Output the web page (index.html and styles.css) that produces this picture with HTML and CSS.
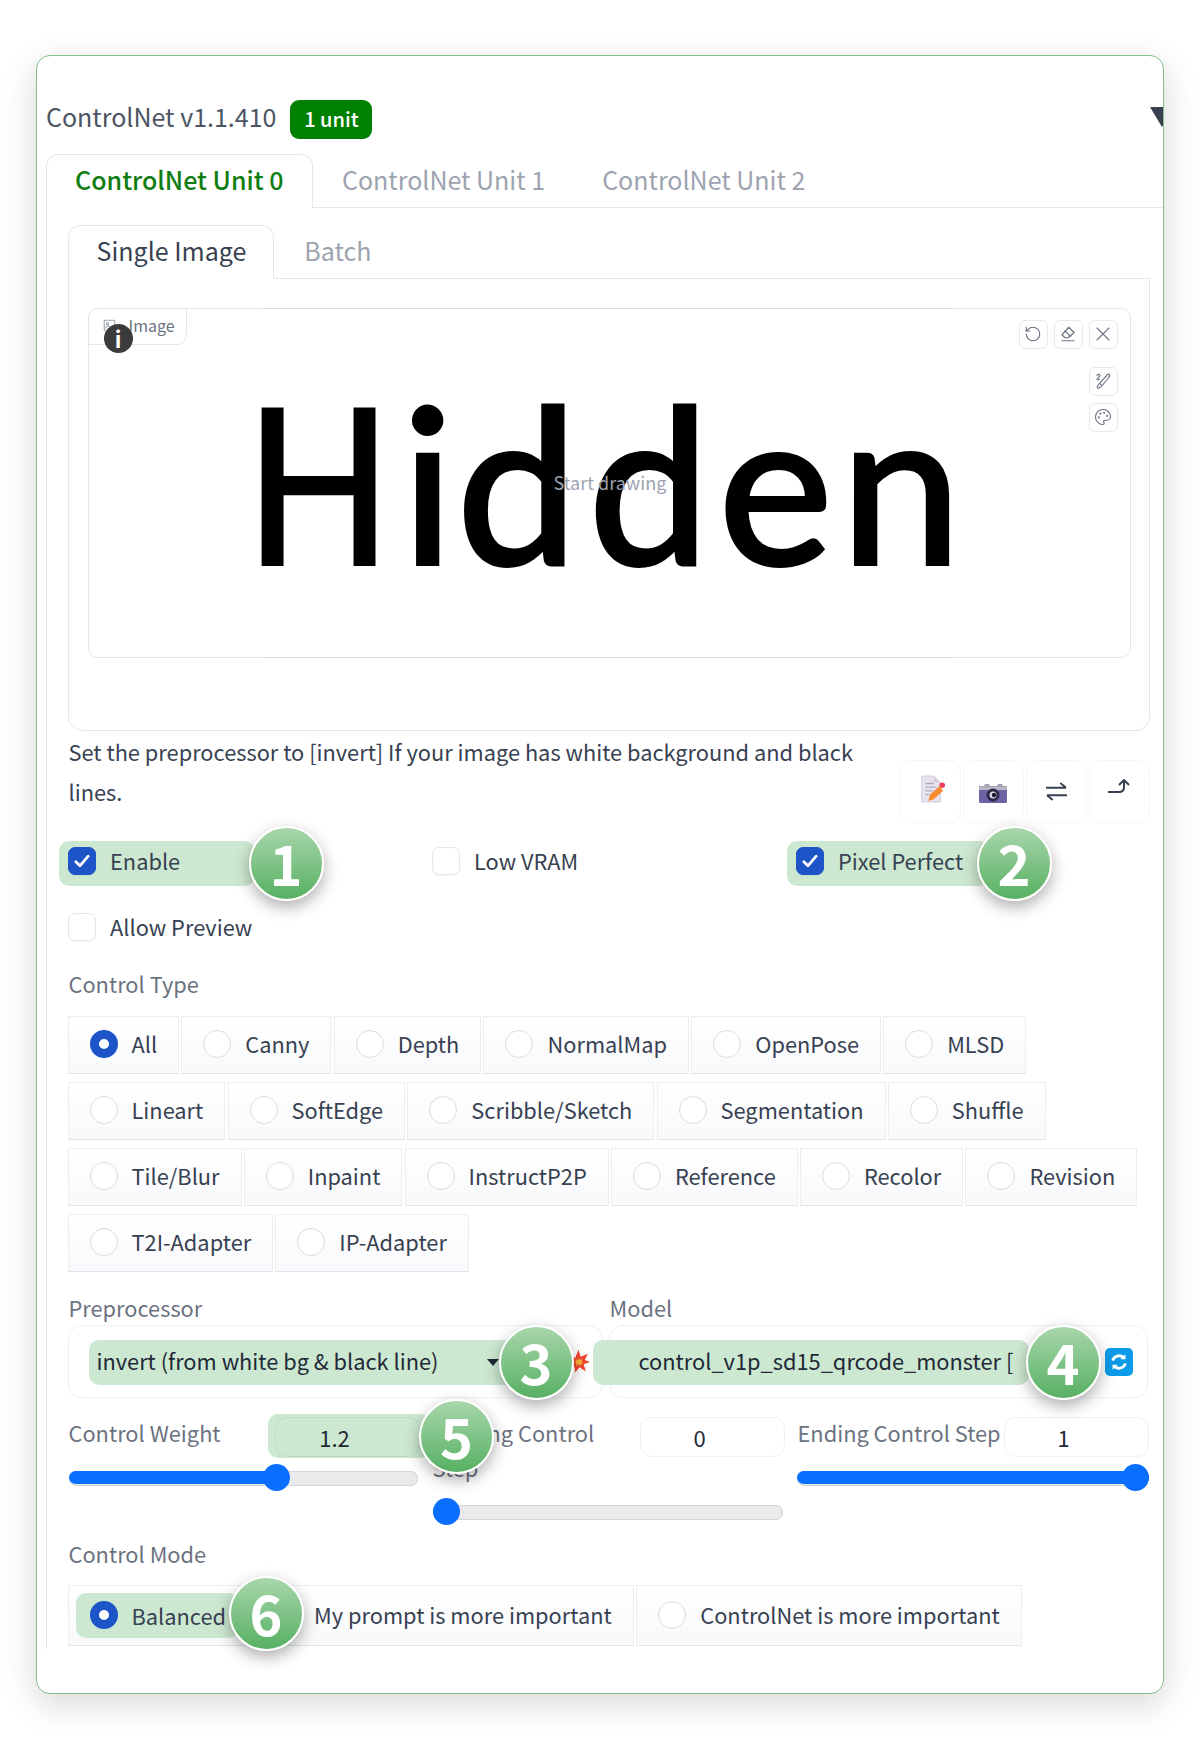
FILE: index.html
```html
<!DOCTYPE html>
<html lang="en">
<head>
<meta charset="utf-8">
<title>ControlNet</title>
<link rel="stylesheet" href="styles.css">
</head>
<body>
<main class="card">
  <header class="head">
    <span class="title">ControlNet v1.1.410</span>
    <span class="unit">1 unit</span>
    <span class="caret"></span>
  </header>
  <nav class="tabs">
    <span class="tab tab-on tab-green">ControlNet Unit 0</span>
    <span class="tab">ControlNet Unit 1</span>
    <span class="tab">ControlNet Unit 2</span>
  </nav>
  <section class="panel">
    <nav class="subtabs">
      <span class="tab tab-on tab-dark">Single Image</span>
      <span class="tab tab-batch">Batch</span>
    </nav>
    <div class="subpanel">
      <div class="imgblock">
        <div class="imglabel">
          <svg class="ico-pic" viewBox="0 0 16 16" fill="none" stroke="#9ca3af" stroke-width="1.3"><rect x="1.5" y="1.5" width="13" height="13" rx="1.5"/><circle cx="5.5" cy="5.5" r="1.3"/><path d="M2 12l4-4 3 3 2-2 3 3"/></svg>
          <span>Image</span>
        </div>
        <span class="info">i</span>
        <div class="canvas"><span class="hidden-word"><span class="hw hw-h">H</span><span class="hw hw-i">i</span><span class="hw hw-d1">d</span><span class="hw hw-d2">d</span><span class="hw hw-e">e</span><span class="hw hw-n">n</span></span></div>
        <span class="startdraw">Start drawing</span>
        <div class="tools">
          <div class="toolrow">
            <span class="tool"><svg viewBox="0 0 24 24"><path d="M3 12a9 9 0 1 0 9-9 9.75 9.75 0 0 0-6.74 2.74L3 8"/><path d="M3 3v5h5"/></svg></span>
            <span class="tool"><svg viewBox="0 0 24 24"><path d="M13 3l7 7-7.5 7H8l-4-4z"/><path d="M8 8l7.5 7"/><path d="M4 21h16"/></svg></span>
            <span class="tool"><svg viewBox="0 0 24 24"><path d="M4 4l16 16M20 4L4 20"/></svg></span>
          </div>
          <span class="tool tool-gap"><svg viewBox="0 0 24 24"><path d="M20 3c1.5 1 1.5 2.500 0 4L11 18c-1 1.200-3 3.500-5 3.500-1.500 0-2-1.500-1.500-2.500C6 16.500 16 6 17 4.500 18 3.200 19 2.500 20 3z"/><path d="M8 15.500l2 2"/><path d="M4 4.500c1-1.500 4-2 4 0s-4 3.500-4 5c0 1.200 2.500 1 3.500 0"/></svg></span>
          <span class="tool tool-gap2"><svg viewBox="0 0 24 24"><circle cx="13.500" cy="6.500" r=".6"/><circle cx="17.500" cy="10.500" r=".6"/><circle cx="8.500" cy="7.500" r=".6"/><circle cx="6.500" cy="12.500" r=".6"/><path d="M12 2C6.500 2 2 6.500 2 12s4.500 10 10 10c.926 0 1.648-.746 1.648-1.688 0-.437-.18-.835-.437-1.125-.29-.289-.438-.652-.438-1.125a1.640 1.640 0 0 1 1.668-1.668h1.996c3.051 0 5.555-2.503 5.555-5.554C21.965 6.012 17.461 2 12 2z"/></svg></span>
        </div>
      </div>
    </div>

    <div class="descrow">
      <p class="desc">Set the preprocessor to [invert] If your image has white background and black lines.</p>
      <div class="actions">
        <span class="action action-doc"><svg viewBox="0 0 28 30"><path d="M3 1h13l7 7v21H3z" fill="#e8e4ee" stroke="#cfc9da"/><path d="M16 1v7h7" fill="#d5cfe0"/><path d="M7 9h9M7 13h12M7 17h8M7 21h4" stroke="#b0a9c2" stroke-width="1.500"/><path d="M10 28l2-7 10-9 4 5-10 9z" fill="#f58a2e"/><circle cx="25" cy="11" r="3" fill="#ef3f5f"/></svg></span>
        <span class="action action-cam"><svg viewBox="0 0 30 21"><path d="M6 3l1-2h4l1 2h7l1-2h4l1 2h4v3H1V3z" fill="#a8a3b4"/><rect x="1" y="4" width="28" height="16" rx="1.500" fill="#6e62a6"/><rect x="1" y="4" width="28" height="3" fill="#b9b5c4"/><circle cx="15" cy="12" r="6.500" fill="#2f2a45"/><circle cx="15" cy="12" r="3.500" fill="#dcd8ea"/><circle cx="16" cy="12" r="2.200" fill="#1d1930"/></svg></span>
        <span class="action action-swap"><svg class="line" viewBox="0 0 24 20"><path d="M1 6h21M16 1l6 5"/><path d="M23 14H2M8 19l-6-5"/></svg></span>
        <span class="action action-up"><svg class="line" viewBox="0 0 24 15"><path d="M1 13h11c3 0 5-2 5-5V2"/><path d="M12 6l5-5 5 5"/></svg></span>
      </div>
    </div>

    <div class="checks">
      <label class="check hl hl-enable"><span class="box box-on"><svg viewBox="0 0 16 16"><path d="M3.500 8.500l3 3 6-7"/></svg></span>Enable</label>
      <label class="check"><span class="box"></span>Low VRAM</label>
      <label class="check hl hl-pixel"><span class="box box-on"><svg viewBox="0 0 16 16"><path d="M3.500 8.500l3 3 6-7"/></svg></span>Pixel Perfect</label>
    </div>
    <div class="checks checks-2">
      <label class="check"><span class="box"></span>Allow Preview</label>
    </div>

    <h3 class="lab lab-type">Control Type</h3>
    <div class="radios">
      <label class="radio"><span class="dot dot-on"></span>All</label>
      <label class="radio"><span class="dot"></span>Canny</label>
      <label class="radio"><span class="dot"></span>Depth</label>
      <label class="radio"><span class="dot"></span>NormalMap</label>
      <label class="radio"><span class="dot"></span>OpenPose</label>
      <label class="radio"><span class="dot"></span>MLSD</label>
      <label class="radio"><span class="dot"></span>Lineart</label>
      <label class="radio"><span class="dot"></span>SoftEdge</label>
      <label class="radio"><span class="dot"></span>Scribble/Sketch</label>
      <label class="radio"><span class="dot"></span>Segmentation</label>
      <label class="radio"><span class="dot"></span>Shuffle</label>
      <label class="radio"><span class="dot"></span>Tile/Blur</label>
      <label class="radio"><span class="dot"></span>Inpaint</label>
      <label class="radio"><span class="dot"></span>InstructP2P</label>
      <label class="radio"><span class="dot"></span>Reference</label>
      <label class="radio"><span class="dot"></span>Recolor</label>
      <label class="radio"><span class="dot"></span>Revision</label>
      <label class="radio"><span class="dot"></span>T2I-Adapter</label>
      <label class="radio"><span class="dot"></span>IP-Adapter</label>
    </div>

    <div class="selects">
      <div class="selcol selcol-a">
        <h3 class="lab">Preprocessor</h3>
        <div class="selbox">
          <div class="selhl selhl-a"><span>invert (from white bg &amp; black line)</span><i class="arrow"></i></div>
          <svg class="boom" viewBox="0 0 20 24"><path d="M9 1l2 7 7-3-3 6 5 2-6 2 2 7-6-4-4 5-1-6-5 0 4-4-3-5 5 1z" fill="#f2472e"/><path d="M9 8l1 3 3-1-1 3 2 1-3 1 1 2-3-2-2 2v-3l-2-1 2-1-1-2 3 1z" fill="#ffb23e"/></svg>
        </div>
      </div>
      <div class="selcol selcol-b">
        <h3 class="lab">Model</h3>
        <div class="selbox">
          <div class="selhl selhl-b"><span>control_v1p_sd15_qrcode_monster [</span></div>
          <span class="refresh"><svg viewBox="0 0 24 24"><path d="M5 10.500A7.500 7.500 0 0 1 18 8"/><path d="M19 3.500V9h-5.500z" class="fillw"/><path d="M19 13.500A7.500 7.500 0 0 1 6 16"/><path d="M5 20.500V15h5.500z" class="fillw"/></svg></span>
        </div>
      </div>
    </div>

    <div class="sliders">
      <div class="sl sl-a">
        <div class="slhead">
          <span class="sllab">Control Weight</span>
          <span class="numhl"><span class="num num-hl">1.2</span></span>
        </div>
        <div class="track"><span class="fill fill-a"></span><span class="thumb"></span></div>
      </div>
      <div class="sl sl-b">
        <div class="slhead slhead-tall">
          <span class="sllab">Starting Control Step</span>
          <span class="num">0</span>
        </div>
        <div class="track"><span class="fill fill-b"></span><span class="thumb"></span></div>
      </div>
      <div class="sl sl-c">
        <div class="slhead">
          <span class="sllab">Ending Control Step</span>
          <span class="num">1</span>
        </div>
        <div class="track"><span class="fill fill-c"></span><span class="thumb"></span></div>
      </div>
    </div>

    <h3 class="lab lab-mode">Control Mode</h3>
    <div class="modes">
      <label class="radio radio-mode radio-bal"><span class="balhl"><span class="dot dot-on"></span>Balanced</span></label>
      <label class="radio radio-mode"><span class="dot"></span>My prompt is more important</label>
      <label class="radio radio-mode"><span class="dot"></span>ControlNet is more important</label>
    </div>
  </section>

  <span class="pin pin-1">1</span>
  <span class="pin pin-2">2</span>
  <span class="pin pin-3">3</span>
  <span class="pin pin-4">4</span>
  <span class="pin pin-5">5</span>
  <span class="pin pin-6">6</span>
</main>
</body>
</html>
```
FILE: styles.css
```css
* { box-sizing: border-box; }
html, body { margin: 0; padding: 0; background: #fff; }
body {
  width: 1200px;
  height: 1750px;
  overflow: hidden;
  padding: 55px 36px 0 36px;
  font-family: "Noto Sans CJK SC", "Noto Sans", sans-serif;
  color: #374151;
  font-size: 21.8px;
}
.card {
  position: relative;
  width: 1128px;
  height: 1639px;
  background: #fff;
  border: 1.5px solid #83c08f;
  border-radius: 14px;
  box-shadow: 0 10px 34px rgba(0, 0, 0, .16);
  overflow: hidden;
  padding: 43.5px 0 0 9px;
}
.head { display: flex; align-items: center; height: 39px; }
.title { font-size: 25px; line-height: 33px; margin-top: -6px; color: #4b5563; }
.unit {
  margin-left: 14px;
  width: 82px;
  height: 39px;
  background: #008000;
  color: #fff;
  border-radius: 9px;
  font-size: 20px;
  font-weight: 500;
  line-height: 37px;
  text-align: center;
}
.caret {
  margin-left: auto;
  margin-right: -10.5px;
  margin-top: -5px;
  width: 0;
  height: 0;
  border-left: 12px solid transparent;
  border-right: 12px solid transparent;
  border-top: 20px solid #374151;
}
.tabs {
  display: flex;
  height: 54px;
  margin-top: 15px;
  border-bottom: 1px solid #e5e7eb;
}
.tab {
  display: block;
  height: 54px;
  padding: 0 27.5px;
  font-size: 25px;
  line-height: 49px;
  color: #9ca3af;
  white-space: nowrap;
  border: 1px solid transparent;
  border-bottom: 0;
  border-radius: 12px 12px 0 0;
}
.tab-on {
  background: #fff;
  border-color: #e5e7eb;
  padding: 0 29px 0 28px;
}
.tab-green { color: #0f7d12; font-weight: 500; }
.tab-dark { color: #374151; padding: 0 27px 0 28px; }
.panel {
  border-left: 1px solid #e5e7eb;
  padding: 17px 13.5px 0 20.5px;
  height: 1441px;
}
.subtabs {
  display: flex;
  height: 54px;
  position: relative;
  z-index: 1;
}
.tab-batch { padding: 0 29px; }
.subpanel {
  margin-top: -1px;
  height: 453px;
  border: 1px solid #e5e7eb;
  border-radius: 0 0 14px 14px;
  padding: 29px 18px 0 19px;
}
.imgblock {
  position: relative;
  height: 350px;
  border: 1px solid #e5e7eb;
  border-radius: 10px;
  display: flex;
  justify-content: center;
}
.imglabel {
  position: absolute;
  left: -1px;
  top: -1px;
  width: 99px;
  height: 37px;
  display: flex;
  align-items: center;
  gap: 13px;
  padding: 0 0 2px 14px;
  font-size: 16px;
  color: #6b7280;
  border: 1px solid #e5e7eb;
  border-radius: 10px 0 10px 0;
  background: #fff;
}
.ico-pic { width: 13px; height: 15px; flex: none; }
.info {
  position: absolute;
  left: 15px;
  top: 15px;
  width: 29px;
  height: 29px;
  border-radius: 50%;
  background: #3b3b3b;
  color: #fff;
  font-size: 22px;
  font-weight: 700;
  line-height: 28px;
  text-align: center;
  z-index: 2;
}
.canvas {
  width: 694px;
  margin: -1px 0;
  border-top: 1.5px solid #dcdcdc;
  border-bottom: 1.5px solid #dcdcdc;
  display: flex;
  justify-content: center;
  overflow: visible;
}
.hidden-word {
  font-family: Lato, "Noto Sans", sans-serif;
  font-size: 216px;
  line-height: 343px;
  height: 343px;
  margin-left: -8px;
  color: #000;
  -webkit-text-stroke: 4px #000;
  white-space: nowrap;
}
.hw { display: inline-block; }
.hw-h { letter-spacing: -9px; transform: scaleX(.88); transform-origin: left center; }
.hw-i { letter-spacing: 3px; }
.hw-d1 { letter-spacing: 11px; }
.hw-d2 { letter-spacing: 9px; }
.hw-e { letter-spacing: 8px; }
.hw-n { letter-spacing: 3px; }
.startdraw {
  position: absolute;
  left: 465px;
  top: 159px;
  font-size: 18px;
  line-height: 28px;
  color: #9ca3af;
  white-space: nowrap;
}
.tools {
  position: absolute;
  right: 12px;
  top: 11px;
  display: flex;
  flex-direction: column;
  align-items: flex-end;
}
.toolrow { display: flex; gap: 6px; }
.tool {
  display: flex;
  align-items: center;
  justify-content: center;
  width: 29px;
  height: 29px;
  border: 1px solid #e8e9ec;
  border-radius: 6px;
  background: #fff;
}
.tool svg {
  width: 18px;
  height: 18px;
  fill: none;
  stroke: #6b7280;
  stroke-width: 1.500;
  stroke-linecap: round;
  stroke-linejoin: round;
}
.tool-gap { margin-top: 18px; }
.tool-gap2 { margin-top: 7px; }

.descrow { display: flex; justify-content: space-between; height: 91px; margin-top: 1px; }
.desc { margin: 0; width: 800px; padding-left: 1px; line-height: 40px; color: #374151; }
.actions { display: flex; gap: 2px; margin-top: 28px; height: 63px; }
.action {
  display: flex;
  justify-content: center;
  align-items: flex-start;
  width: 61px;
  height: 63px;
  border: 1px solid #f7f7f8;
  border-radius: 12px;
}
.action-doc { padding: 14px 0 0 3px; }
.action-doc svg { width: 26px; height: 28px; }
.action-cam { padding-top: 22px; }
.action-cam svg { width: 30px; height: 21px; }
.action-swap { padding-top: 21px; }
.action-swap svg { width: 23px; height: 19px; }
.action-up { padding-top: 18px; }
.action-up svg { width: 24px; height: 15px; }
.line { fill: none; stroke: #374151; stroke-width: 2; }
.checks {
  display: grid;
  grid-template-columns: repeat(3, 364px);
  height: 45px;
  margin: 18px 0 0 -9px;
}
.checks-2 { margin-top: 21px; }
.check {
  display: flex;
  align-items: center;
  gap: 14.5px;
  height: 45px;
  padding: 0 0 5px 9px;
  border-radius: 10px;
  color: #374151;
}
.hl { background: #cde8d0; }
.hl-enable { width: 196px; }
.hl-pixel { width: 202px; }
.box {
  width: 28px;
  height: 28px;
  flex: none;
  border: 1.500px solid #e5e7eb;
  border-radius: 7px;
  background: #fff;
  box-shadow: 0 1px 1px rgba(0, 0, 0, .05);
  display: flex;
  align-items: center;
  justify-content: center;
}
.box-on { background: #1d54c8; border-color: #1d54c8; }
.box svg { width: 22px; height: 22px; fill: none; stroke: #fff; stroke-width: 2; stroke-linecap: round; stroke-linejoin: round; }
.lab { margin: -2px 0 2px; padding-left: 1px; font-size: 21.8px; font-weight: 400; line-height: 30px; color: #6b7280; }
.lab-type { margin-top: 17px; margin-bottom: 17px; }
.radios { display: flex; flex-wrap: wrap; gap: 8px 2.2px; width: 1080px; }
.radio {
  display: flex;
  align-items: center;
  gap: 14px;
  height: 58px;
  padding: 0 21px 2px;
  border: 1px solid #eceef1;
  border-bottom-color: #e2e4e9;
  background: linear-gradient(180deg, #fff, #f8f9fb);
  color: #374151;
  white-space: nowrap;
}
.dot {
  width: 28px;
  height: 28px;
  flex: none;
  border-radius: 50%;
  border: 1.500px solid #dadce1;
  background: #fff;
}
.dot-on { border: 9px solid #1d54c8; background: #fff; }

.selects { display: flex; gap: 6px; margin-top: 23px; }
.selcol-a { width: 535px; }
.selcol-b { width: 539px; }
.selbox {
  position: relative;
  display: flex;
  align-items: center;
  height: 73px;
  padding-top: 2px;
  border: 1px solid #eef0f2;
  border-radius: 14px;
  background: #fff;
}
.selhl {
  display: flex;
  align-items: center;
  height: 45px;
  background: #cde8d0;
  border-radius: 10px;
  padding-bottom: 3px;
  color: #1f2937;
  white-space: nowrap;
  overflow: hidden;
}
.selhl-a { margin-left: 20px; width: 430px; padding-left: 8px; position: relative; }
.selhl-b { margin-left: -17px; width: 436px; padding-left: 46px; }
.arrow {
  position: absolute;
  left: 398px;
  top: 19px;
  width: 0;
  height: 0;
  border-left: 6px solid transparent;
  border-right: 6px solid transparent;
  border-top: 7px solid #1f2937;
}
.boom { position: absolute; right: 12px; top: 22px; width: 21px; height: 26px; }
.refresh {
  margin-left: auto;
  margin-right: 14px;
  display: flex;
  align-items: center;
  justify-content: center;
  width: 28px;
  height: 28px;
  background: #0b9be8;
  border-radius: 5px;
}
.refresh svg { width: 22px; height: 22px; fill: none; stroke: #fff; stroke-width: 3; }
.refresh .fillw { fill: #fff; stroke: none; }

.sliders { display: grid; grid-template-columns: 350px 351px 352px; gap: 14px; margin-top: 19px; }
.slhead { display: flex; justify-content: space-between; align-items: flex-start; min-height: 41px; }
.slhead-tall { min-height: 74px; }
.sllab { line-height: 35px; margin-top: -2px; padding-left: 1px; color: #6b7280; width: 200px; }
.sl-c .sllab { width: 204px; white-space: nowrap; }
.num {
  display: block;
  width: 145px;
  height: 40px;
  flex: none;
  border: 1px solid #eef0f2;
  border-radius: 12px;
  padding: 0 25px 0 0;
  font-size: 22px;
  line-height: 38px;
  text-align: center;
  color: #1f2937;
  background: #fff;
}
.sl-b .num { margin-right: -2px; }
.numhl {
  display: block;
  margin: -3px -12px -1px -7px;
  padding: 3px 10px 1px 7px;
  background: #cde8d0;
  border-radius: 10px;
}
.num-hl { background: transparent; border-color: #bfdcc3; }
.track {
  position: relative;
  height: 27px;
  margin-top: 6px;
}
.sl-a .track, .sl-b .track { margin-left: 1px; }
.slhead-tall + .track { margin-top: 7px; }
.track::before {
  content: "";
  position: absolute;
  left: 0;
  right: 0;
  top: 7px;
  height: 13px;
  border-radius: 7px;
  background: #e9eaec;
  border: 1px solid #d4d5d8;
}
.fill { position: absolute; left: 0; top: 7px; height: 13px; border-radius: 7px; background: #0a6eff; }
.thumb { position: absolute; top: 0; width: 27px; height: 27px; border-radius: 50%; background: #0a6eff; }
.fill-a { width: 207px; }
.sl-a .thumb { left: 194px; }
.fill-b { width: 13px; }
.sl-b .thumb { left: 0; }
.fill-c { width: 100%; }
.sl-c .thumb { right: 0; }

.lab-mode { margin-top: 14px; margin-bottom: 16px; }
.modes { display: flex; gap: 2.5px; }
.radio-mode { height: 61px; padding-bottom: 1px; }
.radio-bal { padding: 0 6px 0 7px; width: 180px; }
.balhl {
  display: flex;
  align-items: center;
  gap: 14px;
  height: 45px;
  width: 163px;
  padding-left: 14px;
  border-radius: 10px;
  background: #cde8d0;
}
.pin {
  position: absolute;
  width: 75px;
  height: 75px;
  border-radius: 50%;
  border: 2px solid #fff;
  background: linear-gradient(180deg, #a8d6ab, #57b063);
  box-shadow: 0 6px 16px rgba(0, 0, 0, .32);
  color: #fff;
  font-size: 56px;
  font-weight: 700;
  line-height: 68px;
  text-align: center;
  z-index: 5;
}
.pin-1 { left: 211.5px; top: 770px; }
.pin-2 { left: 939.5px; top: 770px; }
.pin-3 { left: 461.5px; top: 1269px; }
.pin-4 { left: 988.5px; top: 1269px; }
.pin-5 { left: 382px; top: 1343px; }
.pin-6 { left: 191.5px; top: 1520px; }
```
